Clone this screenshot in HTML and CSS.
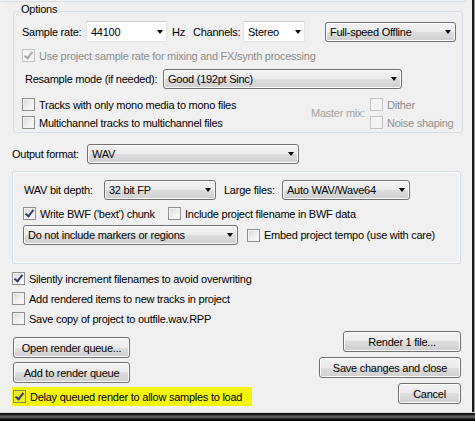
FILE: index.html
```html
<!DOCTYPE html>
<html lang="en">
<head>
  <meta charset="UTF-8"/>
  <title>Render to File</title>
  <link rel="stylesheet" href="styles.css">
</head>
<body>
  <div class="screen">
    <div class="top">
      <div class="dialog">
        <div class="prev-edge"></div>

        <fieldset class="group">
          <legend>Options</legend>
          <div class="row r-rate">
            <span class="lbl w-rate">Sample rate:</span>
            <div class="combo edit w-44100">44100<i class="arrow"></i></div>
            <span class="lbl w-hz">Hz</span>
            <span class="lbl w-chan">Channels:</span>
            <div class="combo edit w-stereo">Stereo<i class="arrow"></i></div>
            <div class="combo w-speed">Full-speed Offline<i class="arrow"></i></div>
          </div>
          <label class="check dim r-gap7"><span class="box on"></span>Use project sample rate for mixing and FX/synth processing</label>
          <div class="row r-resample">
            <span class="lbl w-resample">Resample mode (if needed):</span>
            <div class="combo w-good">Good (192pt Sinc)<i class="arrow"></i></div>
          </div>
          <div class="row r-mix">
            <div class="stack w-mono">
              <label class="check"><span class="box"></span>Tracks with only mono media to mono files</label>
              <label class="check"><span class="box"></span>Multichannel tracks to multichannel files</label>
            </div>
            <span class="lbl faint w-master">Master mix:</span>
            <div class="stack">
              <label class="check dim"><span class="box"></span>Dither</label>
              <label class="check dim"><span class="box"></span>Noise shaping</label>
            </div>
          </div>
        </fieldset>

        <div class="row r-format">
          <span class="lbl w-format">Output format:</span>
          <div class="combo w-wav">WAV<i class="arrow"></i></div>
        </div>

        <div class="panel">
          <div class="row">
            <span class="lbl w-depth">WAV bit depth:</span>
            <div class="combo w-32">32 bit FP<i class="arrow"></i></div>
            <span class="lbl w-large">Large files:</span>
            <div class="combo w-auto">Auto WAV/Wave64<i class="arrow"></i></div>
          </div>
          <div class="row r-bwf">
            <label class="check w-bext"><span class="box on"></span>Write BWF ('bext') chunk</label>
            <label class="check"><span class="box"></span>Include project filename in BWF data</label>
          </div>
          <div class="row r-markers">
            <div class="combo w-markers">Do not include markers or regions<i class="arrow"></i></div>
            <label class="check tempo"><span class="box"></span>Embed project tempo (use with care)</label>
          </div>
        </div>

        <div class="lower">
          <div class="stack left">
            <label class="check"><span class="box on"></span>Silently increment filenames to avoid overwriting</label>
            <label class="check r-gap7"><span class="box"></span>Add rendered items to new tracks in project</label>
            <label class="check r-gap7"><span class="box"></span>Save copy of project to outfile.wav.RPP</label>
            <button class="btn w-queue b-open">Open render queue...</button>
            <button class="btn w-queue b-add">Add to render queue</button>
            <label class="check marked"><span class="box on"></span>Delay queued render to allow samples to load</label>
          </div>
          <div class="stack right">
            <button class="btn w-render">Render 1 file...</button>
            <button class="btn w-save">Save changes and close</button>
            <button class="btn w-cancel">Cancel</button>
          </div>
        </div>
      </div>
      <div class="edge"></div>
    </div>
    <div class="frame-bottom"></div>
  </div>
</body>
</html>
```

FILE: styles.css
```css
body {
  margin:0;
  background:#f0f0f0;
  font-family:'Liberation Sans',Arial,sans-serif;
  font-size:11px;
  letter-spacing:-0.25px;
  color:#000;
}
.screen { width:475px; height:421px; overflow:hidden; display:flex; flex-direction:column; }
.top { display:flex; height:412px; }
.dialog {
  width:472px;
  height:412px;
  box-sizing:border-box;
  padding:0 11px 0 12px;
  background:#f0f0f0;
}
.edge { width:3px; background:linear-gradient(90deg,#1b1b1b 0,#1b1b1b 2px,#9a9a9a 2px); }
.frame-bottom {
  height:9px;
  background:linear-gradient(180deg,#d8d8d8 0,#d8d8d8 1px,#101010 1px,#1e1e1e 3px,#6c6c6c 4px,#4a4a4a 6px,#111 7px,#000 9px);
}

/* tail of the group box above */
.prev-edge {
  margin-left:-11px;
  width:464px;
  height:1px;
  border:1px solid #d5dfe5;
  border-top:none;
  border-left:none;
  border-radius:0 0 3px 0;
}

/* group boxes */
.group {
  margin:0 0 0 1px;
  width:449px;
  box-sizing:border-box;
  padding:0 6px 3px 8px;
  border:1px solid #d5dfe5;
  border-radius:3px;
}
.group legend {
  margin-left:-3px;
  padding:0 2px 5px 2px;
  line-height:14px;
}
.panel {
  margin-top:7px;
  width:449px;
  height:93px;
  box-sizing:border-box;
  padding:8px 0 0 10px;
  border:1px solid #d5dfe5;
  border-radius:3px;
  box-shadow:inset 0 0 0 1px #fafbfc;
}

/* rows */
.row { display:flex; align-items:center; }
.stack { display:flex; flex-direction:column; }
.lbl { white-space:nowrap; }
.faint { color:#a3a3a3; }
.r-rate { height:21px; }
.r-gap7 { margin-top:7px; }
.r-resample { margin-top:7px; padding-left:3px; }
.r-mix { margin-top:9px; }
.r-mix .stack { gap:5px; }
.r-format { margin-top:11px; }
.r-bwf { margin-top:7px; }
.r-markers { margin-top:5px; }

.w-rate { width:64px; }
.w-44100 { width:81px; }
.w-hz { width:21px; margin-left:5px; }
.w-chan { width:50px; }
.w-stereo { width:62px; }
.w-speed { width:131px; margin-left:20px; }
.w-resample { width:138px; }
.w-good { width:239px; }
.w-mono { width:289px; }
.w-master { width:59px; margin-top:-2px; }
.w-format { width:75px; }
.w-wav { width:212px; }
.w-depth { width:80px; padding-left:1px; }
.w-32 { width:112px; }
.w-large { width:58px; margin-left:8px; }
.w-auto { width:128px; }
.w-bext { width:145px; }
.w-markers { width:215px; }
.tempo { margin-left:9px; }

/* checkboxes */
.check { display:flex; align-items:center; height:13px; white-space:nowrap; }
.box {
  position:relative;
  width:13px;
  height:13px;
  box-sizing:border-box;
  margin-right:4px;
  border:1px solid #8e8f8f;
  background:linear-gradient(135deg,#d6d6d6 0%,#f0f0f0 55%,#fdfdfd 100%);
  box-shadow:inset 0 0 0 1px #f4f4f4;
  flex:none;
}
.box.on::after {
  content:"";
  position:absolute;
  left:3px;
  top:0;
  width:3px;
  height:7px;
  border:solid #2f3d66;
  border-width:0 2px 2px 0;
  transform:rotate(38deg);
}
.dim { color:#8d8d8d; }
.dim .box { border-color:#c4c4c4; background:#f4f4f4; box-shadow:none; }
.dim .box.on::after { border-color:#a9a9a9; }

/* combo boxes */
.combo {
  position:relative;
  height:20px;
  box-sizing:border-box;
  padding-left:4px;
  display:flex;
  align-items:center;
  border:1px solid #707070;
  border-radius:3px;
  background:linear-gradient(180deg,#f2f2f2 0%,#ebebeb 50%,#dddddd 50%,#cfcfcf 100%);
  box-shadow:inset 0 0 0 1px #fcfcfc;
  white-space:nowrap;
}
.combo.edit {
  height:21px;
  border-radius:0;
  border-color:#e2e6eb;
  border-top-color:#c9ced6;
  background:#fff;
  box-shadow:none;
}
.arrow {
  position:absolute;
  right:4px;
  top:50%;
  margin-top:-2px;
  width:0;
  height:0;
  border-left:3.5px solid transparent;
  border-right:3.5px solid transparent;
  border-top:4px solid #000;
}
.edit .arrow { right:3px; }

/* buttons */
.btn {
  height:21px;
  padding:0;
  font:inherit;
  letter-spacing:inherit;
  color:#000;
  border:1px solid #707070;
  border-radius:3px;
  background:linear-gradient(180deg,#f2f2f2 0%,#ebebeb 50%,#dddddd 50%,#cfcfcf 100%);
  box-shadow:inset 0 0 0 1px #fcfcfc;
}
.w-queue { width:117px; margin-left:1px; }
.b-open { margin-top:12px; }
.b-add { margin-top:4px; }
.w-render { width:118px; }
.w-save { width:142px; }
.w-cancel { width:63px; }

/* bottom section */
.lower { display:flex; justify-content:space-between; margin-top:8px; }
.left .r-gap7 { margin-top:7px; }
.right { align-items:flex-end; gap:5px; margin-top:59px; }
.marked {
  margin-top:4px;
  height:19px;
  width:240px;
  padding-left:1px;
  box-sizing:border-box;
  background:#f4f40a;
}
.marked .box { background:#ecec2a; box-shadow:none; border-color:#8c8c50; }
```
